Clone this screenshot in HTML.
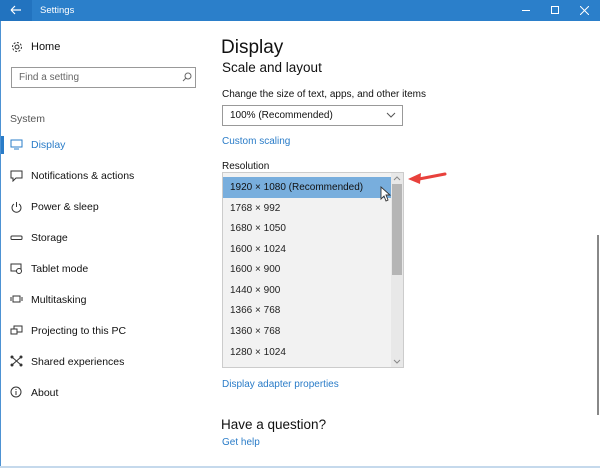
<!DOCTYPE html>
<html><head><style>
*{margin:0;padding:0;box-sizing:border-box}
body{width:600px;height:468px;overflow:hidden;background:#fff;font-family:"Liberation Sans",sans-serif;position:relative;color:#000}
.a{position:absolute;white-space:nowrap}
.tb{left:0;top:0;width:600px;height:21px;background:#2b7fca}
.nav{font-size:10.5px;color:#111}
.ic{position:absolute;left:10px}
.row{position:absolute;left:223px;width:168px;height:20.6px;font-size:10px;line-height:21px;padding-left:7px;color:#222}
.link{color:#2a7cc8;font-size:10px}
</style></head><body>
<div class="a tb"></div>
<div class="a" style="left:0;top:0;width:32px;height:21px;background:#2273bf"></div>
<svg class="a" style="left:10px;top:5px" width="12" height="10"><path d="M1 5H11M1 5L5 1M1 5L5 9" stroke="#fff" stroke-width="1.2" fill="none"/></svg>
<div class="a" style="left:40px;top:5px;font-size:9.5px;color:#fff">Settings</div>
<div class="a" style="left:522px;top:10px;width:8px;height:1px;background:#fff"></div>
<div class="a" style="left:551px;top:6px;width:8px;height:8px;border:1px solid #fff"></div>
<svg class="a" style="left:580px;top:6px" width="9" height="9"><path d="M0 0L9 9M9 0L0 9" stroke="#fff" stroke-width="1"/></svg>
<div class="a" style="left:0;top:21px;width:1px;height:447px;background:#4d92d3"></div>
<div class="a" style="left:0;top:466px;width:600px;height:2px;background:#c5d9ec"></div>
<div class="a" style="left:597px;top:235px;width:2px;height:180px;background:#888"></div>

<svg class="a" style="left:11px;top:41px" width="12" height="12"><circle cx="6" cy="6" r="2" fill="none" stroke="#333"/><circle cx="6" cy="6" r="4.5" fill="none" stroke="#333" stroke-dasharray="2 1.5"/></svg>
<div class="a nav" style="left:31px;top:41px;font-size:11px">Home</div>
<div class="a" style="left:11px;top:67px;width:185px;height:21px;border:1.5px solid #999"></div>
<div class="a" style="left:19px;top:72px;font-size:10px;color:#666">Find a setting</div>
<svg class="a" style="left:182px;top:72px" width="10" height="10"><circle cx="6" cy="4" r="3" fill="none" stroke="#666"/><path d="M4 6L1 9" stroke="#666"/></svg>
<div class="a" style="left:10px;top:113px;font-size:10.5px;color:#555">System</div>
<div class="a" style="left:1px;top:136px;width:3px;height:18px;background:#2a7cc8"></div>
<svg class="ic" style="top:139px" width="13" height="11"><rect x="1" y="1" width="11" height="7" fill="none" stroke="#2a7cc8"/><path d="M4 10H9" stroke="#2a7cc8"/></svg>
<div class="a nav" style="left:31px;top:139px;color:#2a7cc8">Display</div>
<svg class="ic" style="top:170px" width="13" height="12"><path d="M1 1H12V8H6L3 11V8H1Z" fill="none" stroke="#333"/></svg>
<div class="a nav" style="left:31px;top:170px">Notifications &amp; actions</div>
<svg class="ic" style="top:201px" width="13" height="12"><path d="M4 3A4.5 4.5 0 1 0 9 3M6.5 1V6" fill="none" stroke="#333"/></svg>
<div class="a nav" style="left:31px;top:201px">Power &amp; sleep</div>
<svg class="ic" style="top:235px" width="13" height="6"><rect x="1" y="1" width="11" height="3.5" rx="1" fill="none" stroke="#333"/></svg>
<div class="a nav" style="left:31px;top:232px">Storage</div>
<svg class="ic" style="top:263px" width="13" height="12"><rect x="1" y="1" width="10" height="7" fill="none" stroke="#333"/><circle cx="9" cy="8" r="2.5" fill="#fff" stroke="#333"/></svg>
<div class="a nav" style="left:31px;top:263px">Tablet mode</div>
<svg class="ic" style="top:295px" width="13" height="9"><rect x="3" y="1" width="7" height="6" fill="none" stroke="#333"/><path d="M1 2V6M12 2V6" stroke="#333"/></svg>
<div class="a nav" style="left:31px;top:294px">Multitasking</div>
<svg class="ic" style="top:325px" width="13" height="11"><rect x="4" y="1" width="8" height="6" fill="none" stroke="#333"/><rect x="1" y="4" width="6" height="5" fill="#fff" stroke="#333"/></svg>
<div class="a nav" style="left:31px;top:325px">Projecting to this PC</div>
<svg class="ic" style="top:355px" width="13" height="12"><path d="M2 2L11 10M11 2L2 10" stroke="#333"/><circle cx="2" cy="2" r="1.5" fill="#333"/><circle cx="11" cy="2" r="1.5" fill="#333"/><circle cx="2" cy="10" r="1.5" fill="#333"/><circle cx="11" cy="10" r="1.5" fill="#333"/></svg>
<div class="a nav" style="left:31px;top:356px">Shared experiences</div>
<svg class="ic" style="top:386px" width="13" height="12"><circle cx="6" cy="6" r="5" fill="none" stroke="#333"/><path d="M6 5V9M6 3V4" stroke="#333"/></svg>
<div class="a nav" style="left:31px;top:387px">About</div>

<div class="a" style="left:221px;top:37px;font-size:19px;color:#111">Display</div>
<div class="a" style="left:222px;top:60px;font-size:13.5px;color:#111">Scale and layout</div>
<div class="a" style="left:222px;top:89px;font-size:10px;color:#111">Change the size of text, apps, and other items</div>
<div class="a" style="left:222px;top:105px;width:181px;height:21px;border:1.5px solid #999"></div>
<div class="a" style="left:230px;top:110px;font-size:10px;color:#111">100% (Recommended)</div>
<svg class="a" style="left:386px;top:112px" width="10" height="6"><path d="M1 1L5 5L9 1" fill="none" stroke="#555"/></svg>
<div class="a link" style="left:222px;top:136px">Custom scaling</div>
<div class="a" style="left:222px;top:161px;font-size:10px;color:#111">Resolution</div>
<div class="a" style="left:222px;top:172px;width:182px;height:196px;background:#f2f2f2;border:1px solid #ccc"></div>
<div class="row" style="top:177px;background:#78aedd;color:#111">1920 × 1080 (Recommended)</div>
<div class="row" style="top:198px">1768 × 992</div>
<div class="row" style="top:218px">1680 × 1050</div>
<div class="row" style="top:239px">1600 × 1024</div>
<div class="row" style="top:259px">1600 × 900</div>
<div class="row" style="top:280px">1440 × 900</div>
<div class="row" style="top:300px">1366 × 768</div>
<div class="row" style="top:321px">1360 × 768</div>
<div class="row" style="top:342px">1280 × 1024</div>
<div class="a" style="left:391px;top:173px;width:12px;height:194px;background:#e8e8e8"></div>
<div class="a" style="left:392px;top:184px;width:10px;height:91px;background:#b5b5b5"></div>
<svg class="a" style="left:393px;top:176px" width="8" height="5"><path d="M1 4L4 1L7 4" fill="none" stroke="#888"/></svg>
<svg class="a" style="left:393px;top:359px" width="8" height="5"><path d="M1 1L4 4L7 1" fill="none" stroke="#888"/></svg>
<svg class="a" style="left:380px;top:186px" width="12" height="16"><path d="M1 1V13L4 10L6 15L8 14L6 9H10Z" fill="#fff" stroke="#333" stroke-width="0.9"/></svg>
<svg class="a" style="left:405px;top:170px" width="42" height="16"><path d="M40 4L14 9" stroke="#e8413c" stroke-width="3" stroke-linecap="round"/><path d="M3 9L16 3L15 14Z" fill="#e8413c"/></svg>
<div class="a link" style="left:222px;top:379px">Display adapter properties</div>
<div class="a" style="left:221px;top:417px;font-size:13.5px;color:#111">Have a question?</div>
<div class="a link" style="left:222px;top:437px">Get help</div>
</body></html>
